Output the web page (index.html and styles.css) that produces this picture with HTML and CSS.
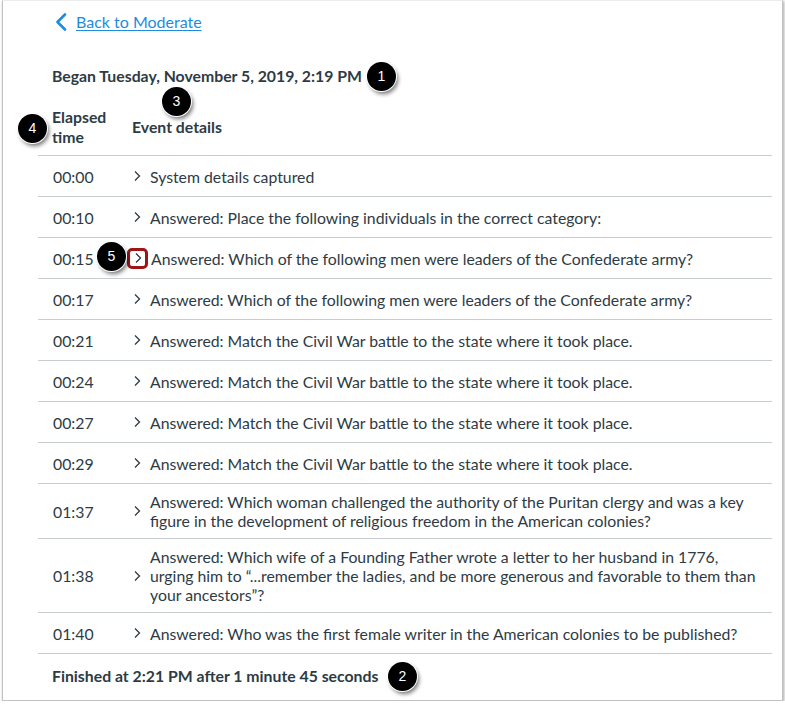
FILE: index.html
```html
<!DOCTYPE html>
<html lang="en">
<head>
<meta charset="utf-8">
<title>Quiz Log</title>
<link rel="stylesheet" href="styles.css">
</head>
<body>
<div class="frame">
  <a class="back" href="#">
    <svg class="back-icon" width="12" height="18" viewBox="0 0 12 18"><polyline points="10,1.5 2.5,9 10,16.5" fill="none" stroke="#1d8ce0" stroke-width="2.6" stroke-linecap="round" stroke-linejoin="round"/></svg>
    <span class="back-text">Back to Moderate</span>
  </a>
  <div class="began">Began Tuesday, November 5, 2019, 2:19 PM</div>

  <div class="log">
    <div class="row head">
      <div class="time">Elapsed time</div>
      <div class="event-head">Event details</div>
    </div>
    <div class="row"><div class="time">00:00</div><div class="event"><span class="chev"><svg width="8" height="12" viewBox="0 0 8 12"><polyline points="2,1.5 6.5,6 2,10.5" fill="none" stroke="#2d3b45" stroke-width="1.3"/></svg></span><span class="text">System details captured</span></div></div>
    <div class="row"><div class="time">00:10</div><div class="event"><span class="chev"><svg width="8" height="12" viewBox="0 0 8 12"><polyline points="2,1.5 6.5,6 2,10.5" fill="none" stroke="#2d3b45" stroke-width="1.3"/></svg></span><span class="text">Answered: Place the following individuals in the correct category:</span></div></div>
    <div class="row"><div class="time">00:15</div><div class="event"><span class="chev marked"><svg width="8" height="12" viewBox="0 0 8 12"><polyline points="2,1.5 6.5,6 2,10.5" fill="none" stroke="#2d3b45" stroke-width="1.3"/></svg></span><span class="text">Answered: Which of the following men were leaders of the Confederate army?</span></div></div>
    <div class="row"><div class="time">00:17</div><div class="event"><span class="chev"><svg width="8" height="12" viewBox="0 0 8 12"><polyline points="2,1.5 6.5,6 2,10.5" fill="none" stroke="#2d3b45" stroke-width="1.3"/></svg></span><span class="text">Answered: Which of the following men were leaders of the Confederate army?</span></div></div>
    <div class="row"><div class="time">00:21</div><div class="event"><span class="chev"><svg width="8" height="12" viewBox="0 0 8 12"><polyline points="2,1.5 6.5,6 2,10.5" fill="none" stroke="#2d3b45" stroke-width="1.3"/></svg></span><span class="text">Answered: Match the Civil War battle to the state where it took place.</span></div></div>
    <div class="row"><div class="time">00:24</div><div class="event"><span class="chev"><svg width="8" height="12" viewBox="0 0 8 12"><polyline points="2,1.5 6.5,6 2,10.5" fill="none" stroke="#2d3b45" stroke-width="1.3"/></svg></span><span class="text">Answered: Match the Civil War battle to the state where it took place.</span></div></div>
    <div class="row"><div class="time">00:27</div><div class="event"><span class="chev"><svg width="8" height="12" viewBox="0 0 8 12"><polyline points="2,1.5 6.5,6 2,10.5" fill="none" stroke="#2d3b45" stroke-width="1.3"/></svg></span><span class="text">Answered: Match the Civil War battle to the state where it took place.</span></div></div>
    <div class="row"><div class="time">00:29</div><div class="event"><span class="chev"><svg width="8" height="12" viewBox="0 0 8 12"><polyline points="2,1.5 6.5,6 2,10.5" fill="none" stroke="#2d3b45" stroke-width="1.3"/></svg></span><span class="text">Answered: Match the Civil War battle to the state where it took place.</span></div></div>
    <div class="row"><div class="time">01:37</div><div class="event"><span class="chev"><svg width="8" height="12" viewBox="0 0 8 12"><polyline points="2,1.5 6.5,6 2,10.5" fill="none" stroke="#2d3b45" stroke-width="1.3"/></svg></span><span class="text">Answered: Which woman challenged the authority of the Puritan clergy and was a key figure in the development of religious freedom in the American colonies?</span></div></div>
    <div class="row"><div class="time">01:38</div><div class="event"><span class="chev"><svg width="8" height="12" viewBox="0 0 8 12"><polyline points="2,1.5 6.5,6 2,10.5" fill="none" stroke="#2d3b45" stroke-width="1.3"/></svg></span><span class="text">Answered: Which wife of a Founding Father wrote a letter to her husband in 1776, urging him to “...remember the ladies, and be more generous and favorable to them than your ancestors”?</span></div></div>
    <div class="row"><div class="time">01:40</div><div class="event"><span class="chev"><svg width="8" height="12" viewBox="0 0 8 12"><polyline points="2,1.5 6.5,6 2,10.5" fill="none" stroke="#2d3b45" stroke-width="1.3"/></svg></span><span class="text">Answered: Who was the first female writer in the American colonies to be published?</span></div></div>
  </div>
  <div class="finished">Finished at 2:21 PM after 1 minute 45 seconds</div>

  <span class="badge b1">1</span>
  <span class="badge b2">2</span>
  <span class="badge b3">3</span>
  <span class="badge b4">4</span>
  <span class="badge b5">5</span>
</div>
</body>
</html>
```
FILE: styles.css
```css
html, body {
  margin: 0;
  padding: 0;
  background: #ffffff;
}
body {
  font-family: Lato, "Open Sans", sans-serif;
  color: #2d3b45;
  font-size: 15.8px;
}
.frame {
  position: relative;
  margin-left: 2px;
  width: 781px;
  height: 701px;
  box-sizing: border-box;
  border: 1px solid #c2c2c2;
  border-top-color: #ececec;
  box-shadow: 1px 1px 3px rgba(0, 0, 0, 0.35);
  padding: 11px 10px 0 35px;
  background: #fff;
}
.back {
  display: flex;
  align-items: center;
  gap: 9px;
  margin-left: 17px;
  height: 20px;
  color: #1d8ce0;
  text-decoration: none;
}
.back-icon {
  display: block;
  flex: none;
}
.back-text {
  font-size: 16px;
  line-height: 20px;
  text-decoration: underline;
  text-underline-offset: 2px;
}
.began {
  margin-top: 34px;
  padding-left: 14px;
  font-weight: 700;
  line-height: 20px;
}
.log {
  margin-top: 21px;
}
.row {
  display: grid;
  grid-template-columns: 89px 1fr;
  align-items: center;
  padding: 8px 0;
  min-height: 24px;
  border-bottom: 1px solid #c7cdd1;
  line-height: 19px;
}
.row.head {
  align-items: center;
  padding: 0 0 8px;
  font-weight: 700;
  line-height: 20px;
}
.time {
  padding-left: 15px;
}
.head .time {
  width: 66px;
  padding-left: 14px;
}
.event-head {
  padding-left: 5px;
}
.event {
  display: flex;
  align-items: center;
  gap: 3px;
}
.chev {
  flex: none;
  width: 20px;
  height: 20px;
  box-sizing: border-box;
  display: flex;
  align-items: center;
  justify-content: center;
  border-radius: 4px;
}
.chev svg {
  display: block;
}
.chev.marked {
  width: 21px;
  height: 21px;
  border: 3px solid #9e1518;
  border-radius: 5px;
}
.text {
  padding-right: 8px;
}
.finished {
  padding: 12px 0 0 14px;
  font-weight: 700;
  line-height: 20px;
}
.badge {
  position: absolute;
  width: 29px;
  height: 29px;
  border-radius: 50%;
  background: #000;
  color: #fff;
  font-family: "Liberation Sans", Arial, sans-serif;
  font-size: 14px;
  line-height: 29px;
  text-align: center;
  box-shadow: 0 0 0 1px #fff, 2px 3px 4px rgba(0, 0, 0, 0.55);
}
.b1 { left: 364px; top: 61px; }
.b2 { left: 385px; top: 661px; }
.b3 { left: 159px; top: 86px; }
.b4 { left: 15px; top: 113px; }
.b5 { left: 94px; top: 241px; }
```
